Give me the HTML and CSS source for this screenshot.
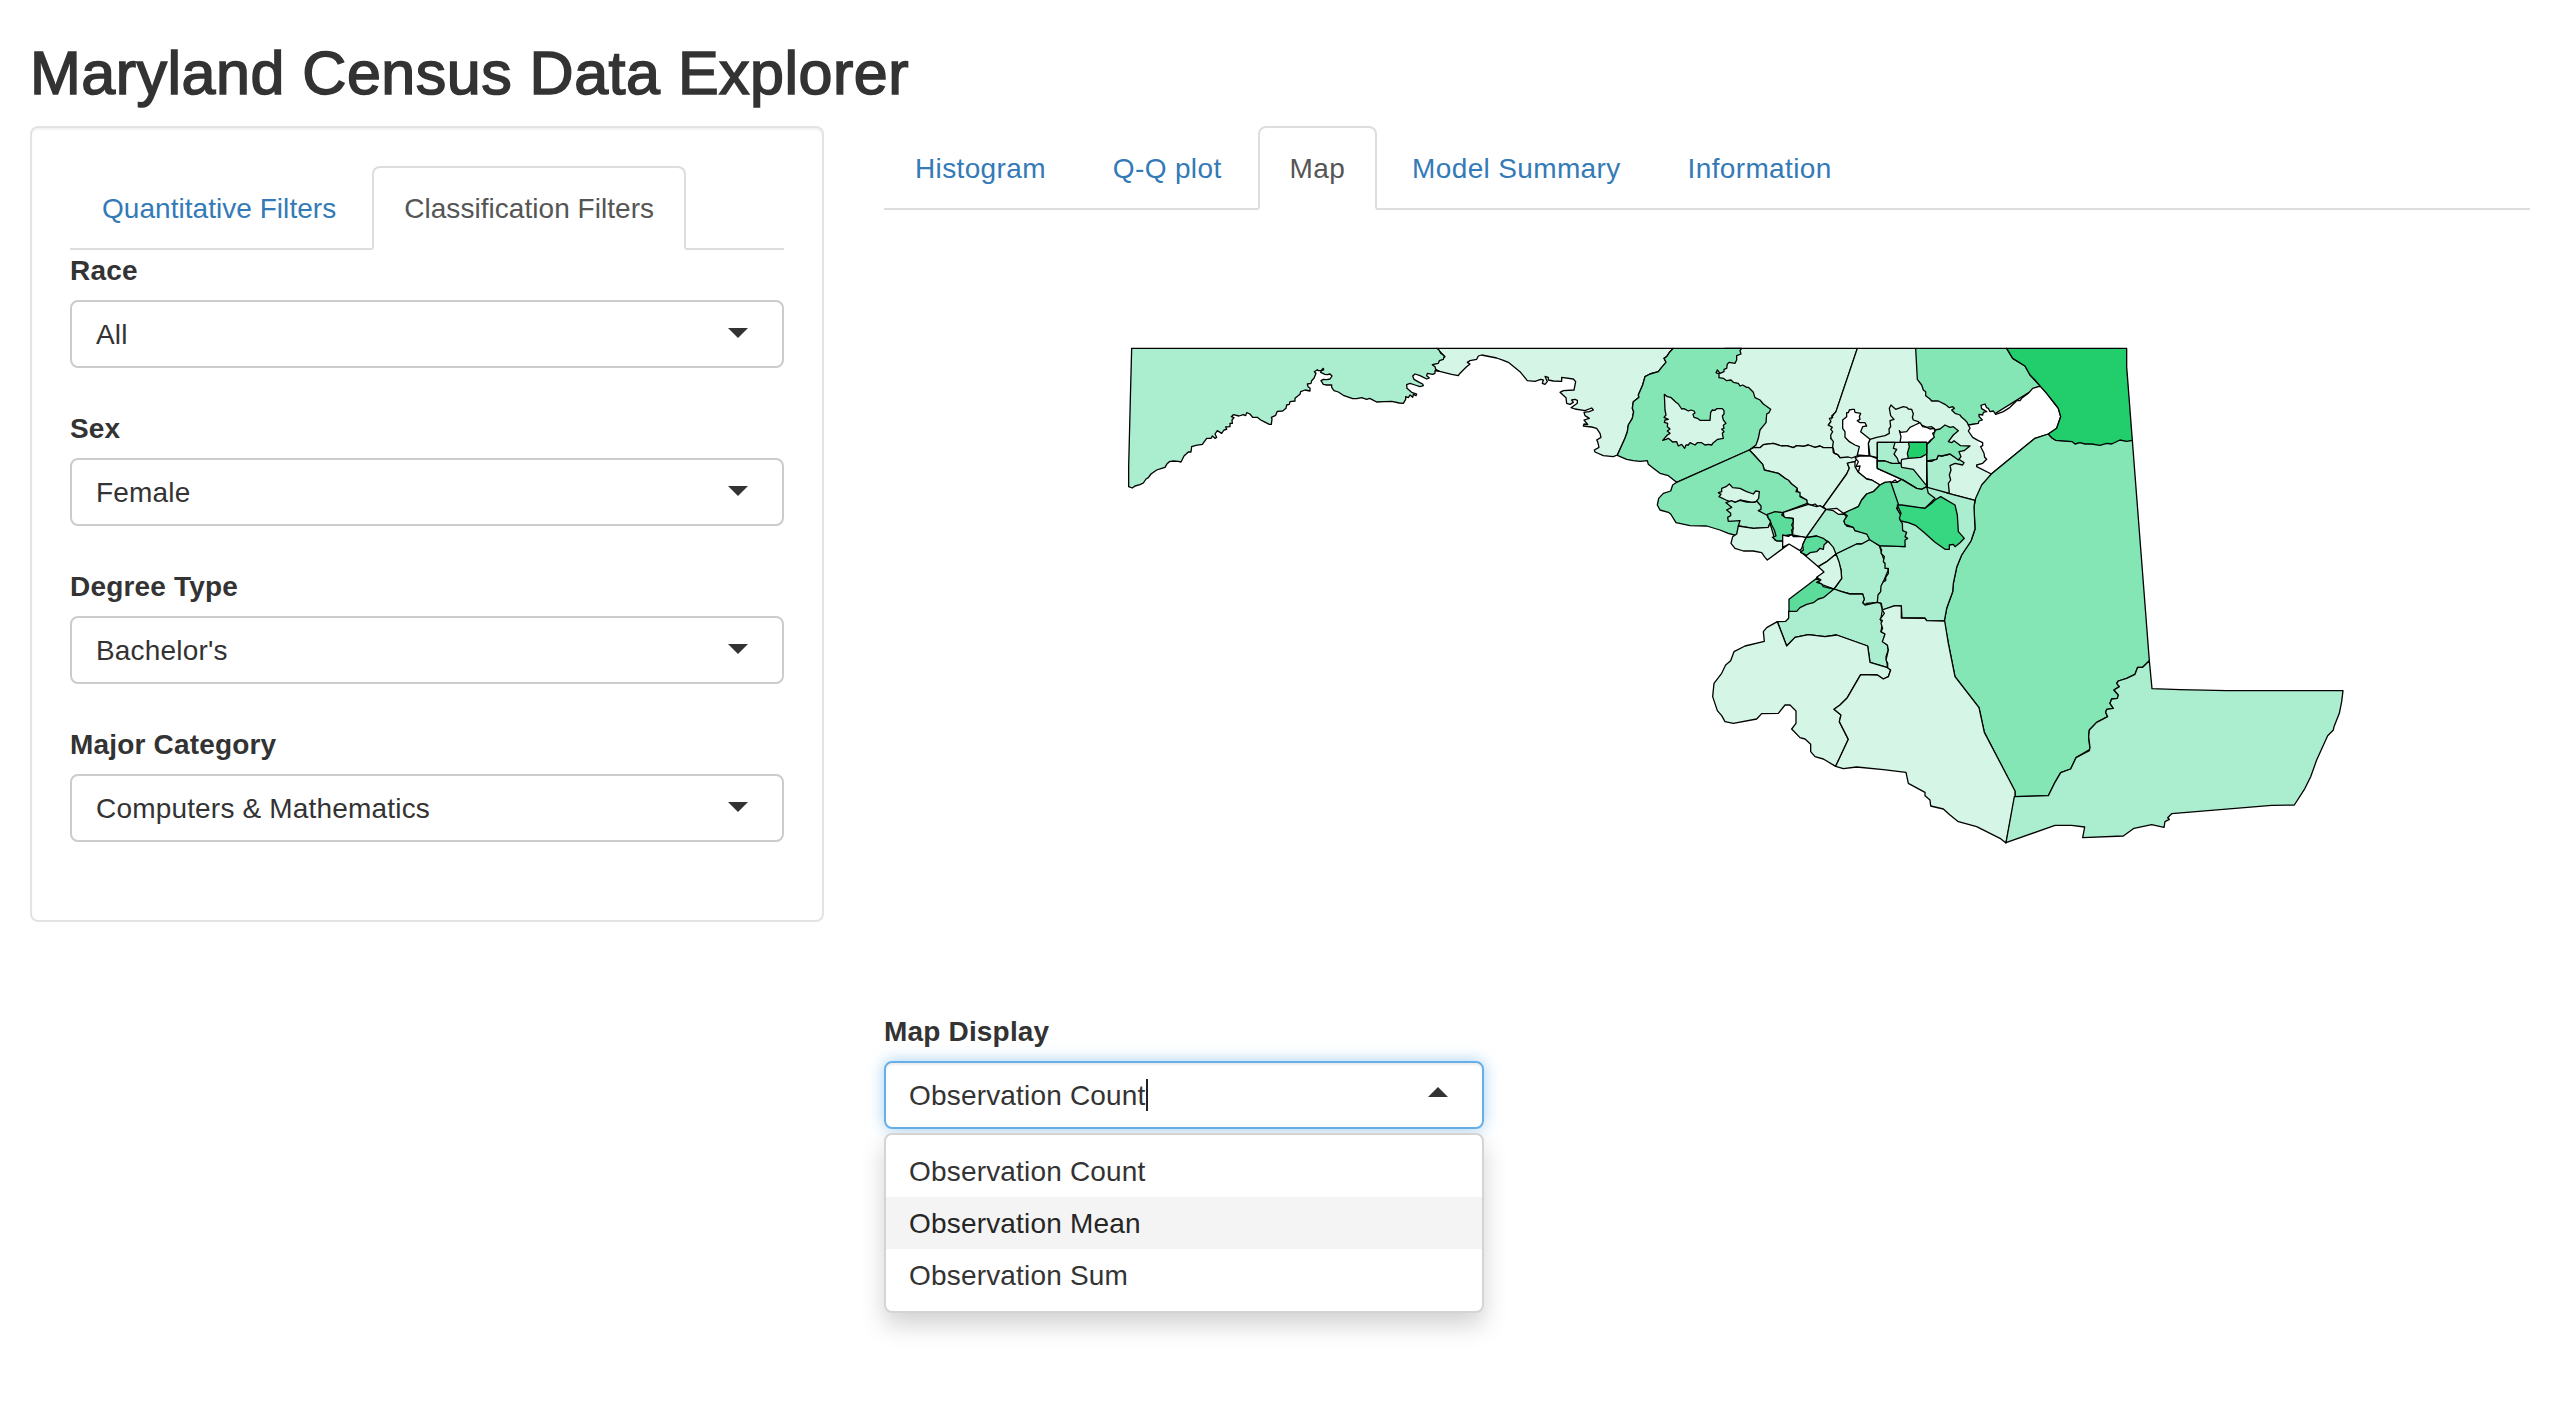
FILE: index.html
```html
<!DOCTYPE html>
<html lang="en">
<head>
<meta charset="utf-8">
<title>Maryland Census Data Explorer</title>
<link rel="stylesheet" href="styles.css">
</head>
<body>
<h2 class="title">Maryland Census Data Explorer</h2>
<div class="row">
  <aside class="well">
    <nav class="tabs">
      <a class="tab">Quantitative Filters</a>
      <a class="tab active">Classification Filters</a>
    </nav>
    <div class="field"><label>Race</label><div class="select"><span>All</span><i class="caret"></i></div></div>
    <div class="field"><label>Sex</label><div class="select"><span>Female</span><i class="caret"></i></div></div>
    <div class="field"><label>Degree Type</label><div class="select"><span>Bachelor's</span><i class="caret"></i></div></div>
    <div class="field"><label>Major Category</label><div class="select"><span>Computers &amp; Mathematics</span><i class="caret"></i></div></div>
  </aside>
  <main class="main">
    <nav class="tabs">
      <a class="tab">Histogram</a>
      <a class="tab">Q-Q plot</a>
      <a class="tab active">Map</a>
      <a class="tab">Model Summary</a>
      <a class="tab">Information</a>
    </nav>
    <svg class="map" viewBox="-2268 -90 4938 1680">
      <!-- western counties -->
      <g transform="translate(-660 0)">
        <path class="c1" d="M50 55L760 55 750 65 740 80 732 85 738 97 725 112 715 125 690 132 675 140 668 165 655 195 657 202 640 215 637 235 641 245 637 265 625 285 622 305 615 325 592 375 580 380 550 377 525 366 523 360 537 352 533 335 530 330 543 322 540 310 530 295 515 291 490 288 492 282 503 283 492 270 508 265 495 257 492 247 508 245 520 240 515 234 495 242 465 237 453 233 472 220 472 211 465 208 455 210 460 217 450 223 440 220 438 203 420 187 430 182 462 180 467 155 460 147 425 142 425 154 400 153 385 150 385 142 375 139 382 155 375 163 367 160 370 150 362 148 345 154 322 152 300 125 265 97 250 91 230 84 185 75 175 78 170 88 150 92 142 97 150 102 138 112 118 132 115 137 95 133 50 122 38 105 60 90 75 80Z"/>
      </g>
      <g transform="translate(-1590 0)">
        <path class="c2" d="M65 55L980 55 987 60 992 70 1003 78 1000 88 988 92 985 100 967 104 975 110 977 118 987 123 975 122 975 130 968 133 952 130 950 137 958 144 950 147 930 137 915 132 908 138 912 148 928 157 938 162 940 167 930 170 915 165 900 160 890 164 891 175 905 187 920 192 918 197 910 193 908 202 900 195 895 203 887 200 887 208 880 220 868 219 845 214 822 215 800 216 785 208 779 205 770 208 755 203 740 206 728 206 700 196 685 186 672 182 665 172 665 165 650 165 640 163 633 152 640 148 650 149 660 147 666 138 660 132 652 134 645 133 632 127 634 122 641 120 640 115 633 122 625 122 622 119 613 125 618 130 612 145 605 152 603 160 592 162 594 170 600 174 600 183 585 180 572 185 570 193 555 205 555 213 540 215 538 223 530 225 528 235 518 243 502 244 497 256 484 262 486 267 484 283 478 283 462 275 452 270 442 262 428 262 420 252 410 248 407 257 400 254 387 258 370 254 364 260 372 263 366 270 367 280 360 280 360 290 347 291 350 298 342 300 335 310 322 302 315 312 320 322 315 325 307 318 303 325 290 325 277 343 258 346 245 350 243 366 235 366 222 378 213 396 205 394 190 393 178 395 170 403 165 412 155 415 140 420 123 432 115 443 108 447 100 459 90 464 75 468 67 474 56 470 56 410 61 208Z"/>
      </g>
      <!-- central counties -->
      <path class="c1" d="M255 55L652 55 588 245 578 258 575 270 565 285 578 300 572 325 580 335 580 353 550 353 540 348 525 352 505 345 490 349 470 347 460 353 440 347 425 348 400 340 370 344 360 353 342 352 225 120Z"/>
      <path class="c3" d="M100 55L305 55 300 62 303 72 290 77 290 90 285 100 268 97 262 102 260 115 252 118 252 125 240 130 232 120 228 128 237 132 237 143 250 145 260 152 273 150 280 157 295 160 300 168 308 165 320 172 325 172 340 187 345 203 360 210 370 222 392 238 387 248 380 252 378 278 368 290 360 300 355 325 348 345 328 360 110 457 85 437 60 430 40 415 25 403 22 392 0 394 -20 392 -40 388 -68 376 -45 325 -38 305 -35 285 -23 265 -19 245 -23 235 -20 215 -3 202 -5 195 8 165 15 140 30 132 55 125 65 112 78 97 72 85 80 80 90 65Z"/>
      <path class="c1" d="M73 193L82 200 92 202 108 217 115 222 125 237 132 236 145 243 153 240 162 243 165 249 159 253 162 262 172 265 180 271 210 271 212 247 217 240 225 241 230 236 247 236 252 242 252 252 247 258 250 270 258 280 250 286 252 295 245 297 252 305 247 310 250 325 233 328 220 338 215 345 205 343 195 345 185 338 172 338 165 345 150 338 145 345 138 345 134 355 125 343 115 348 110 335 98 336 85 325 78 328 68 331 82 315 90 310 82 303 90 297 82 290 83 280 73 277 75 270 85 268 72 262 78 255 75 240Z"/>
      <path class="c1" d="M328 360L342 352 360 353 370 344 400 340 425 348 440 347 460 353 470 347 490 349 505 345 525 352 540 348 550 353 580 353 583 370 595 375 600 383 655 380 645 395 622 400 628 415 620 432 550 530 535 530 525 522 515 525 500 520 500 510 478 497 470 475 455 462 435 445 415 430 373 420 368 403 345 378Z"/>
      <path class="c3" d="M110 457L328 360 345 378 368 403 373 420 390 424 415 430 435 445 445 450 455 462 472 475 468 485 480 487 480 500 500 510 502 520 430 547 447 640 283 615 265 610 240 600 200 588 150 587 108 578 92 552 85 547 60 540 52 525 56 505 70 490 92 483 98 465Z"/>
      <g transform="translate(0 420)">
        <path class="c1" d="M235 68L245 65 245 55 258 50 268 42 278 53 300 55 320 65 340 72 347 63 358 65 356 85 348 95 335 98 325 95 300 90 285 97 270 95 258 90 237 80 243 73Z"/>
        <path class="c2" d="M258 98L275 92 285 97 300 91 320 96 345 97 350 93 363 108 363 118 355 122 380 135 392 155 385 172 340 175 295 168 300 152 265 154 263 142 272 137 272 130 260 120 275 112Z"/>
        <path class="c1" d="M295 168L340 175 385 172 390 160 405 210 428 213 430 232 447 222 382 270 375 262 365 248 340 243 310 243 285 235 273 220 278 200 290 192Z"/>
        <path class="c1" d="M430 127L505 103 530 110 540 107 558 118 498 203 458 195 460 145 432 143Z"/>
        <path class="c4" d="M382 133L405 125 430 128 425 135 437 143 458 145 460 155 455 165 460 175 455 180 457 193 430 198 428 213 410 213 397 202 408 198 403 180 395 165 390 150 385 145Z"/>
        <path class="c2" d="M558 118L580 122 595 133 612 132 620 140 612 155 620 168 640 172 645 182 680 190 690 210 665 222 650 222 588 252 565 215 530 198 498 203Z"/>
        <path class="c0" d="M428 195L445 199 455 193 460 200 485 200 498 203 490 220 485 235 480 242 447 222 428 232Z"/>
        <path class="c1" d="M482 245L565 215 580 232 588 252 560 275 535 290Z"/>
        <path class="c4" d="M498 203L530 198 550 205 562 215 552 225 550 238 540 235 530 245 510 248 500 256 482 247 490 240 488 225Z"/>
        <path class="c2" d="M588 252L650 222 665 222 690 208 718 227 727 255 735 280 745 300 730 335 722 365 712 397 680 400 675 405 668 398 673 388 668 372 630 372 605 365 582 357 605 325 603 300Z"/>
        <path class="c1" d="M535 290L560 275 588 252 597 275 603 300 605 325 582 357 550 345 532 335 543 330 530 322 552 306Z"/>
      </g>
      <!-- northern bay counties -->
      <path class="f1" d="M652 55L827 55 985 285 1040 388 1054 432 1005 511 860 465 712 390 605 383 580 353 572 325 565 285 588 245Z"/>
      <path class="ln" d="M652 55L827 55M652 55L588 245 575 258 578 263 568 265 573 275 565 285 577 292 572 298 578 305 572 315 573 325 580 335 578 350 580 368 592 373 600 383 625 381 635 384 650 378 690 378 712 383M690 378L685 340 690 328 710 322 735 317 748 310 747 297 752 290 750 272 762 268 752 257 748 235 753 225 760 232 767 238 790 230 800 232 805 237 815 238 820 252 817 262 820 270 835 275 845 285 860 292 875 290 885 298M860 465L925 490 1005 511"/>
      <g transform="translate(810 0)">
        <path class="c3" d="M17 55L290 55 308 85 345 108 360 135 392 170 385 170 205 282 175 285 172 278 165 270 155 262 150 255 135 250 125 240 133 235 128 230 118 233 105 223 85 213 65 213 60 207 47 197 47 185 40 180 35 165 22 148Z"/>
        <path class="c0" d="M392 170L385 170 368 175 355 190 335 205 330 212 320 212 300 232 280 245 257 253 250 243 240 245 235 235 230 233 225 222 213 226 215 236 230 245 220 247 218 255 207 253 207 259 217 270 207 273 205 280 175 285 180 295 175 303 188 322 205 332 218 338 218 347 212 350 222 370 224 382 230 388 218 400 200 405 200 410 244 432 350 345 375 325 415 312 440 295 452 260 445 235 410 190Z"/>
        <path class="c3" d="M415 312L425 323 437 331 667 331 718 992 705 1005 698 1012 683 1012 675 1033 650 1045 625 1053 620 1060 628 1070 612 1080 625 1095 622 1105 605 1107 600 1120 610 1135 590 1138 587 1147 593 1160 560 1177 538 1200 536 1220 540 1258 498 1283 482 1317 452 1328 435 1357 415 1397 315 1400 315 1385 223 1207 207 1133 135 1040 115 940 103 873 110 835 128 785 130 760 140 712 155 675 183 633 195 597 192 530 197 505 215 465 244 432 350 345 375 325Z"/>
        <path class="c5" d="M290 55L650 55 650 110 667 331 650 334 630 330 605 342 590 340 570 346 545 342 525 342 510 338 495 342 487 335 460 333 437 331 425 323 415 312 440 295 452 260 445 235 435 222 410 190 392 170 375 150 360 135 345 108 308 85Z"/>
      </g>
      <path class="c2" d="M860 465L925 490 1005 511 1002 530 1005 597 993 633 965 675 950 712 940 760 938 785 920 835 913 873 860 872 855 864 786 864 784 828 765 827 735 837 727 840 724 820 712 817 714 795 722 785 723 768 730 755 737 752 737 742 745 730 745 715 735 715 735 700 730 695 733 680 723 670 725 660 718 647 795 650 770 530Z"/>
      <!-- Baltimore and suburbs -->
      <g transform="translate(540 150)">
        <path class="c2" d="M322 322L320 243 335 244 345 238 350 238 355 226 365 228 390 222 402 230 410 225 415 237 432 248 428 255 405 250 390 257 393 270 388 285 392 300 385 310 388 340Z"/>
        <path class="c3" d="M345 150L360 147 375 135 390 142 400 140 415 152 400 165 385 185 395 188 402 182 422 197 450 198 432 212 417 215 423 230 415 240 402 230 390 222 365 228 355 226 350 238 320 243 320 193 330 185 338 175Z"/>
        <path class="c0" d="M68 120L80 110 80 98 85 98 88 90 97 88 103 88 105 97 122 100 118 110 120 118 112 122 120 128 135 128 140 138 128 140 122 155 150 178 145 190 147 228 112 225 118 200 105 195 88 185 75 172 75 155 68 145Z"/>
        <path class="c0" d="M238 152L242 157 260 155 270 142 285 135 300 128 308 140 320 142 330 147 342 145 345 155 338 160 343 172 332 180 320 193 320 187 240 187 243 170Z"/>
        <path class="c0" d="M105 233L120 228 150 228 172 236 172 265 245 298 232 307 225 300 213 308 195 307 180 315 155 300 140 297 115 277 120 258 108 260 115 245Z"/>
        <path class="c1" d="M172 187H320V322L172 265Z"/>
        <path class="c2" d="M172 187H225L220 205 230 208 222 222 232 235 235 245 243 253 215 250 195 243 172 243Z"/>
        <path class="c5" d="M265 187H320V222L302 232 265 235 262 220 268 200Z"/>
        <path class="ln" d="M265 235L245 238 243 250"/>
        <path class="c3" d="M172 243L195 243 215 250 243 250 245 262 280 268 322 320 305 328 290 325 250 300 245 298 172 265Z"/>
        <path class="c3" d="M210 307L232 307 245 298 290 325 305 328 320 320 325 340 345 355 335 365 315 385 235 377Z"/>
      </g>
      <path class="c1" d="M628 398L645 395 645 410 655 427 680 447 695 450 720 465 700 485 680 492 665 510 655 530 640 537 610 550 590 535 558 538 550 530 620 432 628 415 622 400Z"/>
      <path class="c4" d="M752 455L735 457 720 465 700 485 680 492 665 510 655 530 625 543 612 550 622 557 612 572 615 583 640 592 645 602 680 612 690 630 718 647 795 650 795 630 803 625 795 620 800 607 788 602 787 580 780 570 785 560 770 535 775 522Z"/>
      <g transform="translate(540 150)">
        <path class="c6" d="M232 375L245 375 315 385 335 370 345 360 362 350 405 375 412 405 415 455 433 475 420 488 405 500 400 493 388 495 388 508 375 508 345 487 315 460 288 437 265 428 243 423 238 415 243 400Z"/>
      </g>
      <!-- southern counties -->
      <g transform="translate(150 690)">
        <path class="c2" d="M262 185L287 184 296 175 296 154 432 87 455 95 480 102 518 102 523 118 518 128 525 135 562 127 572 130 577 150 572 180 577 190 573 215 585 222 580 245 592 255 595 270 588 290 593 323 540 307 533 258 440 225 405 230 355 224 315 232 290 258Z"/>
        <path class="c4" d="M380 55L297 118 297 154 320 154 330 143 350 133 370 128 385 117 400 113 432 87 400 80 395 72 380 67 390 62Z"/>
        <path class="c1" d="M262 185L290 258 315 232 355 224 405 230 440 225 533 258 540 307 593 323 602 330 595 350 580 357 562 345 512 344 472 413 450 435 432 448 453 465 448 485 475 538 437 619 400 597 375 590 362 575 362 553 345 537 330 533 305 507 318 490 318 453 300 435 285 435 265 460 215 461 200 477 130 490 105 485 95 467 82 452 68 410 72 370 95 340 107 315 122 302 132 275 165 258 223 244 220 215 230 203Z"/>
        <path class="c1" d="M764 183L775 250 795 350 867 443 883 517 975 693 975 710 948 849 930 835 860 800 805 785 780 765 760 747 722 738 720 720 705 707 705 697 655 670 648 637 580 629 500 621 460 626 437 619 475 538 448 485 453 465 432 448 450 435 472 413 512 344 562 345 580 357 595 350 602 330 593 323 593 310 588 300 595 270 592 255 577 245 585 222 573 215 578 205 573 190 577 182 570 178 583 160 577 150 585 147 615 137 634 138 634 174 705 175 710 182Z"/>
      </g>
      <g transform="translate(960 870)">
        <path class="c2" d="M568 122L576 206 660 209 800 212 1149 212 1145 245 1138 280 1122 320 1120 330 1103 347 1070 420 1052 470 1035 505 1003 555 935 556 635 581 623 593 628 598 615 605 612 622 575 614 522 625 490 648 368 653 374 621 335 616 285 616 138 668 163 530 265 527 285 487 302 458 332 447 348 413 388 392 390 383 386 350 388 330 410 307 443 290 437 277 440 268 460 265 450 250 455 237 472 235 475 225 462 210 478 200 470 190 475 183 500 175 525 163 533 142 548 142 555 135Z"/>
      </g>
    </svg>
    <div class="field display">
      <label>Map Display</label>
      <div class="select focus"><span>Observation Count</span><i class="cursor"></i><i class="caret up"></i>
        <div class="menu">
          <div class="item">Observation Count</div>
          <div class="item hover">Observation Mean</div>
          <div class="item">Observation Sum</div>
        </div>
      </div>
    </div>
  </main>
</div>
</body>
</html>
```
FILE: styles.css
```css
* { box-sizing: border-box; }
body {
  min-height: 1410px;
  margin: 0;
  padding: 40px 30px 0;
  background: #fff;
  color: #333;
  font: 28px/40px "Liberation Sans", Arial, sans-serif;
  letter-spacing: .18px;
}
.title {
  margin: 0 0 20px;
  font-size: 61px;
  line-height: 66px;
  font-weight: 400;
  letter-spacing: .5px;
  -webkit-text-stroke: 1.6px #333;
}
.row { display: flex; align-items: flex-start; gap: 60px; }
.well {
  width: 794px;
  height: 796px;
  padding: 38px;
  border: 2px solid #e3e3e3;
  border-radius: 8px;
  box-shadow: inset 0 2px 2px rgba(0, 0, 0, .05);
}
.main { width: 1646px; }
.tabs { display: flex; gap: 4px; height: 84px; border-bottom: 2px solid #ddd; }
.tab {
  height: 84px;
  padding: 21px 30px;
  border: 2px solid transparent;
  border-radius: 8px 8px 0 0;
  color: #337ab7;
  letter-spacing: .04px;
  white-space: nowrap;
}
.main .tab { padding-left: 29px; letter-spacing: .36px; }
.main .tab.active { padding: 21px 30px; }
.tab.active { color: #555; background: #fff; border-color: #ddd #ddd #fff; }
.field { margin-bottom: 40px; }
label { display: block; height: 40px; margin-bottom: 10px; padding-top: 1px; font-weight: 700; }
.select {
  position: relative;
  display: flex;
  align-items: center;
  height: 68px;
  padding: 0 34px 0 24px;
  border: 2px solid #ccc;
  border-radius: 8px;
}
.select span { padding-top: 2px; }
.caret {
  margin-left: auto;
  margin-bottom: 2px;
  border: 10px solid transparent;
  border-top-color: #333;
  border-bottom: 0;
}
.caret.up { margin-bottom: 6px; border-top: 0; border-bottom: 10px solid #333; }
.map { display: block; width: 1646px; height: 560px; margin-top: 90px; }
.map path { stroke: #000; stroke-width: 3.9; stroke-linejoin: round; }
.map .f1 { fill: #d5f5e6; stroke: none; }
.map .ln { fill: none; }
.c0 { fill: #fff; }
.c1 { fill: #d5f5e6; }
.c2 { fill: #abeecf; }
.c3 { fill: #84e6b5; }
.c4 { fill: #5bdc9b; }
.c5 { fill: #22ce6c; }
.c6 { fill: #37d680; }
.display { width: 600px; margin: 151px 0 0; }
.focus {
  padding-left: 23px;
  border-color: #66afe9;
  box-shadow: inset 0 2px 2px rgba(0, 0, 0, .075), 0 0 16px rgba(102, 175, 233, .6);
}
.cursor { width: 2px; height: 32px; background: #222; }
.menu {
  position: absolute;
  top: 70px;
  left: -2px;
  width: 600px;
  padding: 10px 0;
  background: #fff;
  border: 2px solid #d4d4d4;
  border-radius: 8px;
  box-shadow: 0 12px 24px rgba(0, 0, 0, .18);
}
.item { height: 52px; padding: 7px 23px 5px; }
.item.hover { background: #f4f4f4; color: #262626; }
```
